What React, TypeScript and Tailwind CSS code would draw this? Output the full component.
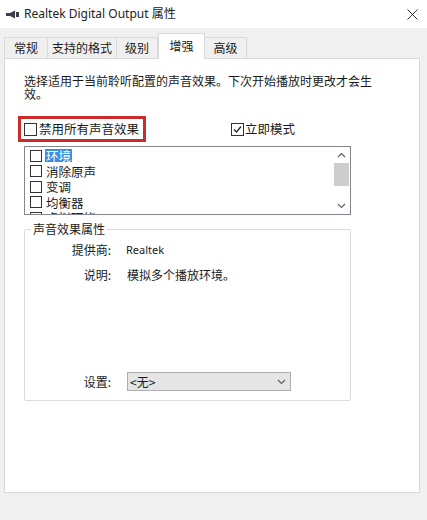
import React from "react";

const font = { fontFamily: '"Noto Sans CJK SC", "Noto Sans", sans-serif' };

function Box({ checked = false, size = 13 }: { checked?: boolean; size?: number }) {
  return (
    <div
      className="shrink-0 border border-[#333333] bg-white flex items-center justify-center"
      style={{ width: size, height: size }}
    >
      {checked && (
        <svg width="11" height="11" viewBox="0 0 11 11">
          <path d="M2 5.5 L4.5 8 L9 2.5" fill="none" stroke="#222" strokeWidth="1.2" />
        </svg>
      )}
    </div>
  );
}

function Chevron({ up = false }: { up?: boolean }) {
  return (
    <svg width="9" height="6" viewBox="0 0 9 6">
      <path
        d={up ? "M1 5 L4.5 1.5 L8 5" : "M1 1 L4.5 4.5 L8 1"}
        fill="none"
        stroke="#606060"
        strokeWidth="1.2"
      />
    </svg>
  );
}

export default function App() {
  const tabs = [
    { t: "常规", w: 44 },
    { t: "支持的格式", w: 70 },
    { t: "级别", w: 42 },
    { t: "增强", w: 47, sel: true },
    { t: "高级", w: 43 },
  ];
  const items = ["环境", "消除原声", "变调", "均衡器", "虚拟环绕"];
  return (
    <div className="w-[427px] h-[520px] bg-[#f0f0f0] text-[12px] text-[#1a1a1a] overflow-hidden" style={font}>
      {/* title bar */}
      <div className="h-[28px] bg-white flex items-center">
        <div className="w-[24px] flex justify-center">
          <svg width="15" height="9" viewBox="0 0 15 9">
            <path d="M1 3 L5 3 L10 0.5 L10 8.5 L5 6 L1 6 Z" fill="#3a3f4a" />
            <rect x="11" y="2" width="3" height="5" fill="#3a3f4a" />
          </svg>
        </div>
        <div className="flex-1 text-[12px] text-[#222]" style={{ fontFamily: '"Noto Sans", "Noto Sans CJK SC", sans-serif' }}>
          Realtek Digital Output 属性
        </div>
        <div className="w-[26px] flex justify-center mr-[2px]">
          <svg width="11" height="11" viewBox="0 0 11 11">
            <path d="M0.5 0.5 L10.5 10.5 M10.5 0.5 L0.5 10.5" stroke="#333" strokeWidth="1" />
          </svg>
        </div>
      </div>

      {/* tabs */}
      <div className="h-[30px] flex items-end pl-[4px] relative z-10">
        {tabs.map((tab) =>
          tab.sel ? (
            <div
              key={tab.t}
              className="h-[26px] -mb-px bg-white border border-b-0 border-[#d9d9d9] flex items-start justify-center pt-[3px]"
              style={{ width: tab.w }}
            >
              {tab.t}
            </div>
          ) : (
            <div
              key={tab.t}
              className="h-[21px] bg-[#f0f0f0] border border-b-0 border-[#d9d9d9] -ml-px first:ml-0 flex items-center justify-center"
              style={{ width: tab.w }}
            >
              {tab.t}
            </div>
          )
        )}
      </div>

      {/* panel */}
      <div className="ml-[4px] w-[416px] h-[435px] bg-white border border-[#d9d9d9] pl-[19px]">
        <div className="mt-[15px] w-[352px] leading-[13px]">
          选择适用于当前聆听配置的声音效果。下次开始播放时更改才会生效。
        </div>

        <div className="mt-[16px] flex items-center">
          <div className="-ml-[6px] w-[128px] h-[26px] border-[3px] border-[#cc2b2b] pl-[3px] flex items-center gap-[2px]">
            <Box />
            <span className="text-[12.5px]">禁用所有声音效果</span>
          </div>
          <div className="ml-[85px] flex items-center gap-[1px]">
            <Box checked />
            <span className="text-[12.5px]">立即模式</span>
          </div>
        </div>

        {/* list */}
        <div className="mt-[4px] w-[327px] h-[69px] border border-[#828790] flex overflow-hidden">
          <div className="flex-1 pt-[1px] pl-[5px]">
            {items.map((it, i) => (
              <div key={it} className="h-[15.5px] flex items-center gap-[3px]">
                <Box size={12} />
                <span
                  className={
                    i === 0
                      ? "bg-[#3b8fe0] text-white px-[1px] leading-[13px] text-[12.5px]"
                      : "px-[1px] leading-[13px] text-[12.5px]"
                  }
                >
                  {it}
                </span>
              </div>
            ))}
          </div>
          <div className="w-[17px] flex flex-col items-center">
            <div className="h-[16px] flex items-center justify-center">
              <Chevron up />
            </div>
            <div className="w-[15px] h-[23px] bg-[#cdcdcd]" />
            <div className="flex-1" />
            <div className="h-[16px] flex items-center justify-center">
              <Chevron />
            </div>
          </div>
        </div>

        {/* group box */}
        <div className="mt-[14px] w-[327px] h-[172px] border border-[#dcdcdc] rounded-[2px] relative">
          <div className="absolute -top-[8px] left-[6px] bg-white px-[2px] leading-[14px]">声音效果属性</div>
          <div className="mt-[12px] flex items-center h-[16px]">
            <div className="w-[86px] text-right">提供商:</div>
            <div className="ml-[15px] text-[11px]" style={{ fontFamily: '"Noto Sans", sans-serif' }}>
              Realtek
            </div>
          </div>
          <div className="mt-[9px] flex items-center h-[16px]">
            <div className="w-[86px] text-right">说明:</div>
            <div className="ml-[16px]">模拟多个播放环境。</div>
          </div>
          <div className="mt-[89px] flex items-center h-[19px]">
            <div className="w-[86px] text-right">设置:</div>
            <div className="ml-[16px] w-[164px] h-[19px] bg-[#e5e5e5] border border-[#adadad] flex items-center pl-[2px] pr-[4px]">
              <span className="flex-1">&lt;无&gt;</span>
              <Chevron />
            </div>
          </div>
        </div>
      </div>
    </div>
  );
}
